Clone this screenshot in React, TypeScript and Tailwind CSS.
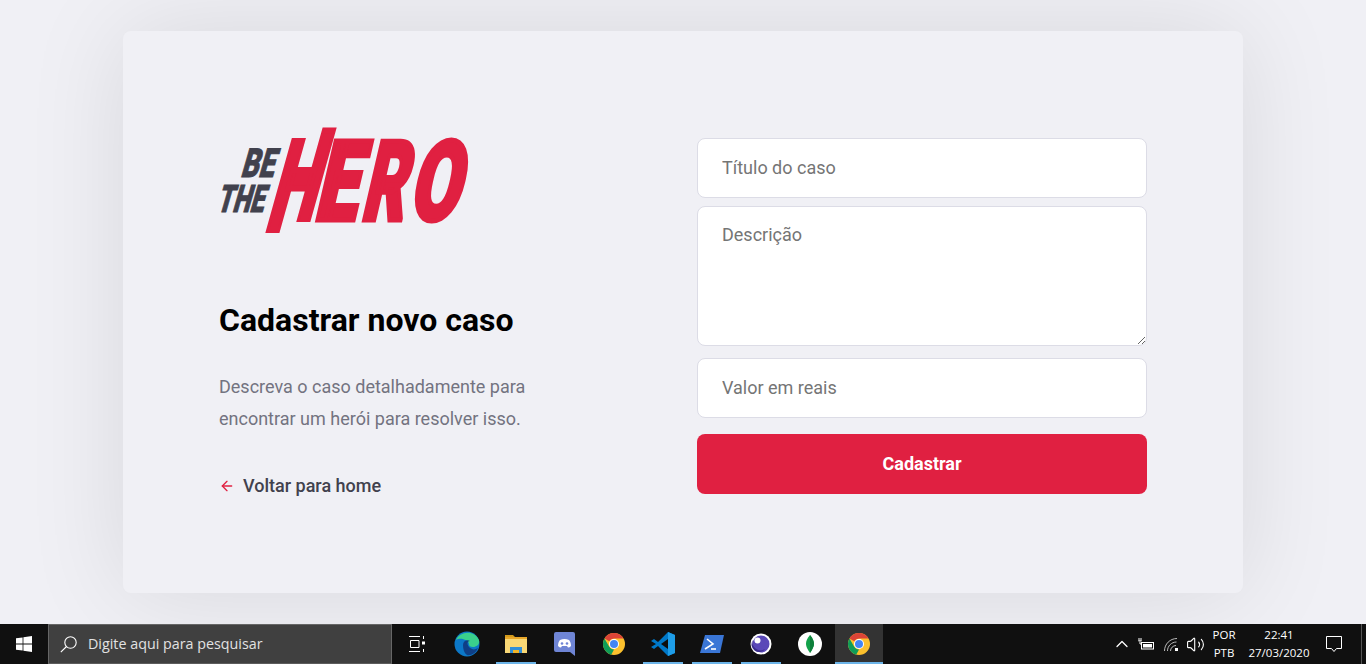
import { ArrowLeft, ChevronUp, Volume2 } from "lucide-react";

const roboto = "font-['Roboto',sans-serif]";

function Logo() {
  return (
    <svg width="250" height="106" viewBox="0 0 250 106" className="block" aria-label="Be The Hero">
      <defs>
        {/* the H of the logo has stems that are offset from one another */}
        <clipPath id="hero-h">
          <polygon points="0,11 95.800,11 98.800,0 250,0 250,95 72.200,95 69.200,106 0,106" />
        </clipPath>
      </defs>
      <g fill="#41414D" stroke="#41414D" fontFamily="Roboto, sans-serif" fontWeight="900" strokeLinejoin="miter">
        <text transform="translate(21 49.500) skewX(-16)" fontSize="40" strokeWidth="1" textLength="33" lengthAdjust="spacingAndGlyphs">BE</text>
        <text transform="translate(-3 84.500) skewX(-16)" fontSize="38" strokeWidth="1" textLength="47" lengthAdjust="spacingAndGlyphs">THE</text>
      </g>
      <g fill="#E02041" stroke="#E02041" fontFamily="Roboto, sans-serif" fontWeight="900" fontSize="111" strokeWidth="5" strokeLinejoin="miter">
        <g clipPath="url(#hero-h)">
          <text transform="translate(45 103) skewX(-15.600) scale(0.470 1)" fontSize="140" strokeWidth="6">H</text>
        </g>
        <text transform="translate(94 92.500) skewX(-13) scale(0.680 1)">E</text>
        <text transform="translate(141 92.500) skewX(-13) scale(0.590 1)">R</text>
        <text transform="translate(188.500 92.500) skewX(-13) scale(0.650 1)">O</text>
      </g>
    </svg>
  );
}

function WindowsIcon() {
  return (
    <svg width="16" height="16" viewBox="0 0 16 16" fill="#fff">
      <path d="M0 2.300 6.600 1.400V7.500H0ZM7.400 1.300 16 0V7.500H7.400ZM0 8.400H6.600V14.600L0 13.700ZM7.400 8.400H16V16L7.400 14.800Z" />
    </svg>
  );
}

function SearchIcon() {
  return (
    <svg width="17" height="17" viewBox="0 0 17 17" fill="none" stroke="#fff" strokeWidth="1.100">
      <circle cx="10.500" cy="6.500" r="5.700" />
      <path d="M6.500 10.500 .8 16.200" />
    </svg>
  );
}

function TaskViewIcon() {
  return (
    <svg width="16" height="16" viewBox="0 0 16 16" fill="none" stroke="#fff" strokeWidth="1">
      <path d="M0 .5H11M0 15.500H11M1.500 4.500H10V11.500H1.500ZM14.500 0V3M14.500 13V16" />
      <rect x="13" y="5.500" width="3" height="3" fill="#fff" stroke="none" />
    </svg>
  );
}

function EdgeIcon() {
  return (
    <svg width="26" height="26" viewBox="0 0 26 26">
      <circle cx="13" cy="13" r="12.500" fill="#0c78c8" />
      <path d="M2 9C5 1 20-2 25 9c1 4-2 7-6 7-3 0-4-1-4-3 0-4-9-7-13-4Z" fill="#3ad08c" />
      <path d="M9 14c0-4 4-6 7-4-4 0-3 6 2 8 2 1 4 0 6-1-2 5-7 8-11 7-3-2-4-6-4-10Z" fill="#0f3f86" />
    </svg>
  );
}

function FolderIcon() {
  return (
    <svg width="22" height="22" viewBox="0 0 22 22">
      <path d="M0 2h8l2 2H0Z" fill="#d29a1c" />
      <rect x="0" y="4" width="22" height="3" fill="#e8a72a" />
      <rect x="0" y="6" width="22" height="14" fill="#f8d775" />
      <path d="M5 20v-6h12v6h-3v-3H8v3Z" fill="#2f8ed8" />
      <rect x="8" y="17" width="6" height="3" fill="#f0b429" />
    </svg>
  );
}

function DiscordIcon() {
  return (
    <svg width="21" height="24" viewBox="0 0 21 24">
      <path d="M2 0h17a2 2 0 0 1 2 2v22l-5-4H2a2 2 0 0 1-2-2V2a2 2 0 0 1 2-2Z" fill="#6f85d5" />
      <path d="M4 14c0-3 1-5 2-6 3-1.200 6-1.200 9 0 1 1 2 3 2 6-1 1-2 1.500-3 1.500l-1-1.500h-5l-1 1.500C6 15.500 5 15 4 14Z" fill="#fff" />
      <circle cx="8" cy="11.500" r="1.300" fill="#6f85d5" />
      <circle cx="13" cy="11.500" r="1.300" fill="#6f85d5" />
    </svg>
  );
}

function ChromeIcon() {
  return (
    <svg width="22" height="22" viewBox="0 0 22 22">
      <circle cx="11" cy="11" r="11" fill="#fbc02d" />
      <path d="M11 0a11 11 0 0 1 9.530 5.500H11a5.500 5.500 0 0 0-4.760 2.750L1.480 5.500A11 11 0 0 1 11 0Z" fill="#db4437" />
      <path d="M1.480 5.500 6.240 13.750A5.500 5.500 0 0 0 11 16.500L8.200 21.640A11 11 0 0 1 1.480 5.500Z" fill="#0f9d58" />
      <circle cx="11" cy="11" r="5" fill="#fff" />
      <circle cx="11" cy="11" r="4" fill="#4285f4" />
    </svg>
  );
}

function VsCodeIcon() {
  return (
    <svg width="24" height="24" viewBox="0 0 24 24">
      <path d="M17 0 24 3v18l-7 3-10-10-4 3-3-2 5-3-5-3 3-2 4 3Z" fill="#0078c8" />
      <path d="M17 0 24 3v18l-7 3Z" fill="#1e9de8" />
      <path d="M17 7 10 12l7 5Z" fill="#0d0d0d" />
    </svg>
  );
}

function PowerShellIcon() {
  return (
    <svg width="24" height="18" viewBox="0 0 24 18">
      <path d="M5 0h19l-4 18H0Z" fill="#3a76d6" />
      <path d="M7 4l6 5-8 5" fill="none" stroke="#fff" strokeWidth="1.600" />
      <path d="M11 14h5" stroke="#fff" strokeWidth="1.600" />
    </svg>
  );
}

function EclipseIcon() {
  return (
    <svg width="22" height="22" viewBox="0 0 22 22">
      <circle cx="11" cy="11" r="10.500" fill="#fff" />
      <circle cx="11" cy="11" r="8.500" fill="#5a48b8" />
      <path d="M3 7a8 8 0 0 0 12 9A6 6 0 0 1 3 7Z" fill="#3a2c8c" />
      <circle cx="7.500" cy="7.500" r="3" fill="#fff" />
    </svg>
  );
}

function MongoIcon() {
  return (
    <svg width="24" height="24" viewBox="0 0 24 24">
      <circle cx="12" cy="12" r="12" fill="#fff" />
      <path d="M12 3c3 3.500 4 6.500 4 9s-2 6-4 9c-2-3-4-6-4-9s1-5.500 4-9Z" fill="#13a24b" />
      <path d="M12 3v18c2-3 4-6.500 4-9s-1-5.500-4-9Z" fill="#0d7f3a" />
    </svg>
  );
}

function BatteryIcon() {
  return (
    <svg width="17" height="14" viewBox="0 0 17 14" fill="none" stroke="#fff">
      <rect x="3.500" y="5.500" width="12" height="6.500" />
      <rect x="5" y="7" width="9" height="3.500" fill="#fff" stroke="none" />
      <path d="M1 1v3M3 1v3M.5 4h3M2 5v2h2" />
    </svg>
  );
}

function WifiIcon() {
  return (
    <svg width="15" height="15" viewBox="0 0 15 15" fill="none" stroke="#bbb">
      <path d="M.5 14C.5 7 6 1.500 13 1.500M3.500 14C3.500 9 7.500 5 12.500 5M6.500 14c0-3 2.500-5.500 5.500-5.500" />
      <rect x="11" y="11" width="3" height="3" fill="#fff" stroke="none" />
    </svg>
  );
}

function NotificationIcon() {
  return (
    <svg width="16" height="16" viewBox="0 0 16 16" fill="none" stroke="#fff">
      <path d="M.5.5h15v12h-5L8 15.500 5.500 12.500h-5Z" />
    </svg>
  );
}

const apps = [
  { key: "edge", icon: <EdgeIcon />, underline: false },
  { key: "explorer", icon: <FolderIcon />, underline: true },
  { key: "discord", icon: <DiscordIcon />, underline: false },
  { key: "chrome", icon: <ChromeIcon />, underline: false },
  { key: "vscode", icon: <VsCodeIcon />, underline: true },
  { key: "powershell", icon: <PowerShellIcon />, underline: true },
  { key: "eclipse", icon: <EclipseIcon />, underline: true },
  { key: "mongo", icon: <MongoIcon />, underline: false },
];

function Taskbar() {
  return (
    <footer className="flex h-10 items-stretch bg-[#101010] font-['Open_Sans',sans-serif] text-white">
      <div className="grid w-12 place-items-center">
        <WindowsIcon />
      </div>
      <div className="flex w-[344px] items-center gap-[11px] border border-[#666] border-b-[#5c5c5c] bg-[#404040] pl-[11px]">
        <SearchIcon />
        <span className="text-[14.300px] text-[#e2e2e2]">Digite aqui para pesquisar</span>
      </div>
      <div className="grid w-[50px] place-items-center">
        <TaskViewIcon />
      </div>
      {apps.map((app) => (
        <div key={app.key} className="relative grid w-[49px] place-items-center">
          {app.icon}
          {app.underline && <span className="absolute bottom-0 left-[5px] h-0.5 w-10 bg-[#6cb4e8]" />}
        </div>
      ))}
      <div className="relative ml-px grid w-12 place-items-center bg-[#333]">
        <ChromeIcon />
        <span className="absolute inset-x-0 bottom-0 h-0.5 bg-[#6cb4e8]" />
      </div>
      <div className="ml-auto flex items-center">
        <ChevronUp className="h-5 w-5" strokeWidth={1.500} />
        <div className="ml-[6px] flex w-[17px] justify-center"><BatteryIcon /></div>
        <div className="ml-[9px] flex w-[15px] justify-center"><WifiIcon /></div>
        <Volume2 className="ml-[7px] h-[19px] w-[19px]" strokeWidth={1.400} />
        <div className="ml-[2px] w-[34px] text-center text-[11.500px] leading-[18px]">
          <div>POR</div>
          <div>PTB</div>
        </div>
        <div className="ml-[1px] w-[74px] text-center text-[11.500px] leading-[18px]">
          <div>22:41</div>
          <div>27/03/2020</div>
        </div>
        <div className="ml-[9px] flex w-[18px] justify-center"><NotificationIcon /></div>
        <div className="ml-[18px] mr-1 h-10 w-px bg-[#555]" />
      </div>
    </footer>
  );
}

export default function App() {
  return (
    <div className={`flex h-[664px] flex-col overflow-hidden bg-[#f0f0f5] ${roboto}`}>
      <main className="flex h-[624px] items-center justify-center">
        <div className="flex h-[562px] w-[1120px] items-center justify-between rounded-lg bg-[#f0f0f5] px-24 pt-[104px] pb-24 shadow-[0_0_100px_rgba(0,0,0,0.1)]">
          <section className="mb-[3px] w-[380px]">
            <Logo />
            <h1 className="mt-[64px] text-[32px] leading-[46px] font-bold text-black">Cadastrar novo caso</h1>
            <p className="mt-7 text-[18px] leading-[32px] text-[#737380]">
              Descreva o caso detalhadamente para encontrar um herói para resolver isso.
            </p>
            <a href="#" className="mt-[35px] flex items-center gap-2 text-[18px] leading-[32px] font-medium text-[#41414d]">
              <ArrowLeft className="h-4 w-4 text-[#e02041]" strokeWidth={2} />
              Voltar para home
            </a>
          </section>
          <form className="flex w-[450px] flex-col">
            <input
              placeholder="Título do caso"
              className="h-[60px] rounded-lg border border-[#dcdce6] bg-white px-6 pb-[2px] text-[18px] text-[#333] placeholder:text-[#757575]"
            />
            <textarea
              placeholder="Descrição"
              className="mt-2 h-[140px] rounded-lg border border-[#dcdce6] bg-white px-6 pt-[15px] pb-4 text-[18px] leading-[25px] text-[#333] placeholder:text-[#757575]"
            />
            <input
              placeholder="Valor em reais"
              className="mt-3 h-[60px] rounded-lg border border-[#dcdce6] bg-white px-6 pb-[2px] text-[18px] text-[#333] placeholder:text-[#757575]"
            />
            <button type="button" className="mt-4 h-[60px] rounded-lg bg-[#e02041] pb-[2px] text-[18px] font-bold text-white">
              Cadastrar
            </button>
          </form>
        </div>
      </main>
      <Taskbar />
    </div>
  );
}
